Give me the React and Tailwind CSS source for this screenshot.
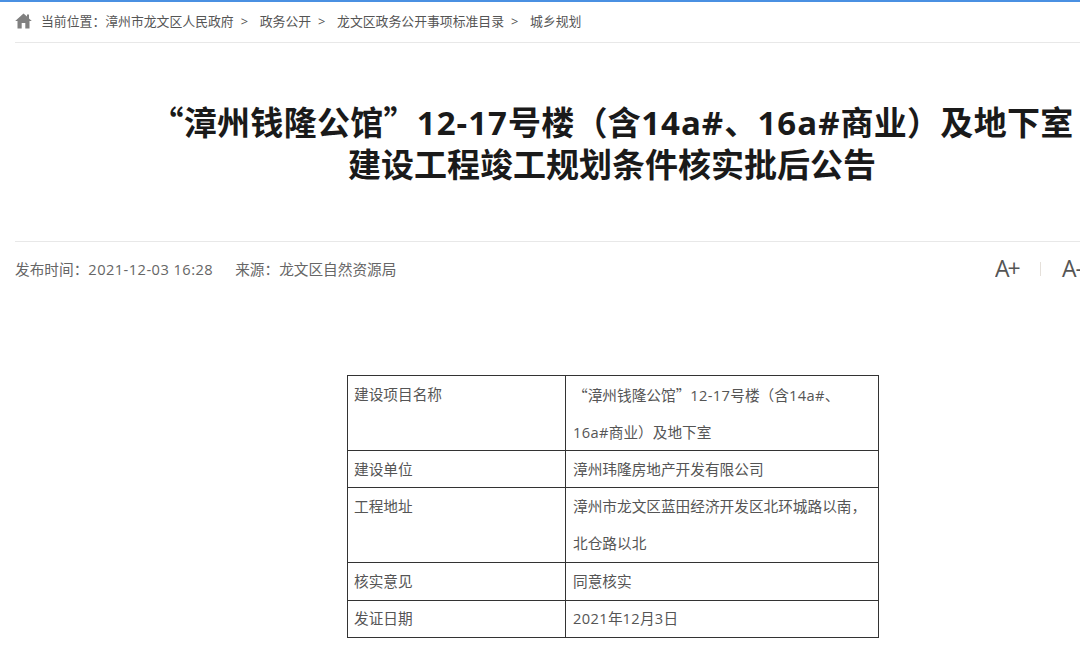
const F = { fontFamily: '"Open Sans","Noto Sans CJK SC",sans-serif' };
const Q = ({ children }) => <span className="font-['Noto_Sans_CJK_SC']">{children}</span>;
const L = ({ children }) => <span className="tracking-[1px]">{children}</span>;
const S = ({ children }) => <span className="tracking-[0.35px]">{children}</span>;
const rows = [
  { h: 'h-[74px]', pt: 'pt-[9px]', l: '建设项目名称', r: [<><Q>“</Q>漳州钱隆公馆<Q>”</Q><S>12-17</S>号楼（含<S>14a#</S>、</>, <><S>16a#</S>商业）及地下室</>] },
  { h: 'h-[37px]', pt: 'pt-[9px]', l: '建设单位', r: ['漳州玮隆房地产开发有限公司'] },
  { h: 'h-[75px]', pt: 'pt-[9px]', l: '工程地址', r: ['漳州市龙文区蓝田经济开发区北环城路以南，', '北仓路以北'] },
  { h: 'h-[38px]', pt: 'pt-[9px]', l: '核实意见', r: ['同意核实'] },
  { h: 'h-[37px]', pt: 'pt-[8px]', l: '发证日期', r: [<><S>2021</S>年<S>12</S>月<S>3</S>日</>] },
];
const crumbs = ['漳州市龙文区人民政府', '政务公开', '龙文区政务公开事项标准目录', '城乡规划'];

export default function App() {
  return (
    <div style={F} className="w-[1080px] h-[647px] overflow-hidden bg-white border-t-2 border-[#4a90e2]">
      <div className="ml-[15px] h-[41px] border-b border-[#e8e8e8] flex items-center text-[12.85px] text-[#555555]">
        <svg width="17" height="16" viewBox="0 0 17 16" className="mr-[9px] -mt-[2px]" fill="#808080">
          <path d="M8.5 0.5 L12 3.6 L12 1.5 L14 1.5 L14 5.4 L16.8 8 L14.5 8 L14.5 15.5 L10.3 15.5 L10.3 10 L6.7 10 L6.7 15.5 L2.5 15.5 L2.5 8 L0.2 8 Z" />
        </svg>
        <span className="whitespace-nowrap">当前位置：</span>
        {crumbs.map((c, i) => (
          <span key={c} className="whitespace-nowrap">
            {c}
            {i < crumbs.length - 1 && <span className="inline-block w-[19px] ml-[7px]">{'>'}</span>}
          </span>
        ))}
      </div>
      <div className="ml-[15px] w-[1065px] overflow-hidden">
        <h1 className="w-[1194px] mt-[57px] h-[142px] text-[33px] leading-[42px] font-bold text-[#1a1a1a] text-center whitespace-nowrap">
          <div className="tracking-[0.3px]"><Q>“</Q>漳州钱隆公馆<Q>”</Q><L>12-17</L>号楼（含<L>14a#</L>、<L>16a#</L>商业）及地下室</div>
          <div>建设工程竣工规划条件核实批后公告</div>
        </h1>
      </div>
      <div className="ml-[15px] border-t border-[#e8e8e8] h-[54px] flex items-center justify-between text-[14.67px] text-[#666666] -mt-[1px]">
        <div className="flex gap-[22px]">
          <span>发布时间：<span className="tracking-[0.45px]">2021-12-03 16:28</span></span>
          <span>来源：龙文区自然资源局</span>
        </div>
        <div className="flex items-center text-[23px] text-[#555555] w-[85px] shrink-0 whitespace-nowrap overflow-hidden">
          <span className="w-[45px] shrink-0 tracking-[-2px]">A+</span>
          <span className="w-px h-[14px] shrink-0 bg-[#e5e0da] mr-[21px]"></span>
          <span className="shrink-0 tracking-[-1px]">A-</span>
        </div>
      </div>
      <div className="mt-[80px] ml-[347px] w-[532px] border border-[#333333] text-[14.67px] text-[#555555]">
        {rows.map((row, i) => (
          <div key={row.l} className={`flex ${row.h} ${i ? 'border-t border-[#333333]' : ''}`}>
            <div className={`w-[218px] border-r border-[#333333] pl-[6px] pr-[7px] ${row.pt} leading-[19px]`}>{row.l}</div>
            <div className={`flex-1 px-[7px] ${row.pt}`}>
              {row.r.map((t, j) => (
                <div key={j} className={j === 0 ? 'leading-[19px]' : 'leading-[19px] mt-[18px]'}>{t}</div>
              ))}
            </div>
          </div>
        ))}
      </div>
    </div>
  );
}
